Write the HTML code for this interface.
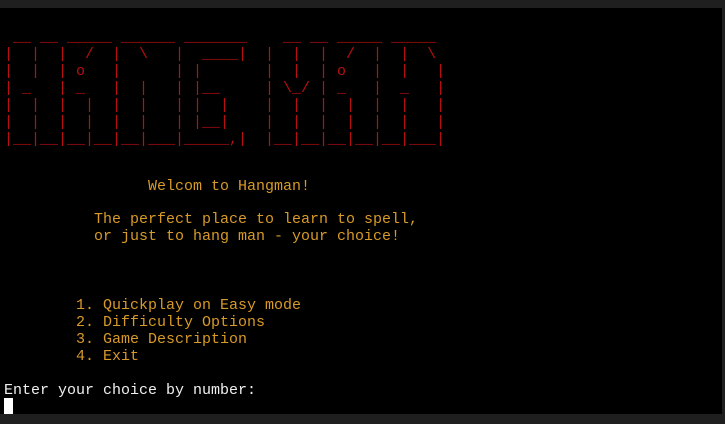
<!DOCTYPE html>
<html><head><style>
html,body{margin:0;padding:0;background:#1f1f1f;width:725px;height:424px;overflow:hidden}
#t{position:absolute;left:0;top:8px;width:722px;height:406px;background:#000}
pre{position:absolute;margin:0;font-family:"Liberation Mono",monospace;font-size:15px;line-height:17px;white-space:pre}
.r{color:#b80f0f;left:4px;top:29px}
.y{color:#d89a28}
.w{color:#f0f0f0}
#cur{position:absolute;left:4px;top:398px;width:9px;height:16px;background:#fff}
</style></head><body>
<div id="t"></div>
<pre class="r"> __ __ _____ ______ _______    __ __ _____ _____
|  |  |  /  |  \   |  ____|  |  |  |  /  |  |  \
|  |  | o   |      | |       |  |  | o   |  |   |
| _   | _   |  |   | |__     | \_/ | _   |  _   |
|  |  |  |  |  |   | |  |    |  |  |  |  |  |   |
|  |  |  |  |  |   | |__|    |  |  |  |  |  |   |
|__|__|__|__|__|___|_____,|  |__|__|__|__|__|___|</pre>
<pre class="y" style="left:148px;top:178px">Welcom to Hangman!</pre>
<pre class="y" style="left:94px;top:211px">The perfect place to learn to spell,
or just to hang man - your choice!</pre>
<pre class="y" style="left:76px;top:297px">1. Quickplay on Easy mode
2. Difficulty Options
3. Game Description
4. Exit</pre>
<pre class="w" style="left:4px;top:382px">Enter your choice by number:</pre>
<div id="cur"></div>
</body></html>
